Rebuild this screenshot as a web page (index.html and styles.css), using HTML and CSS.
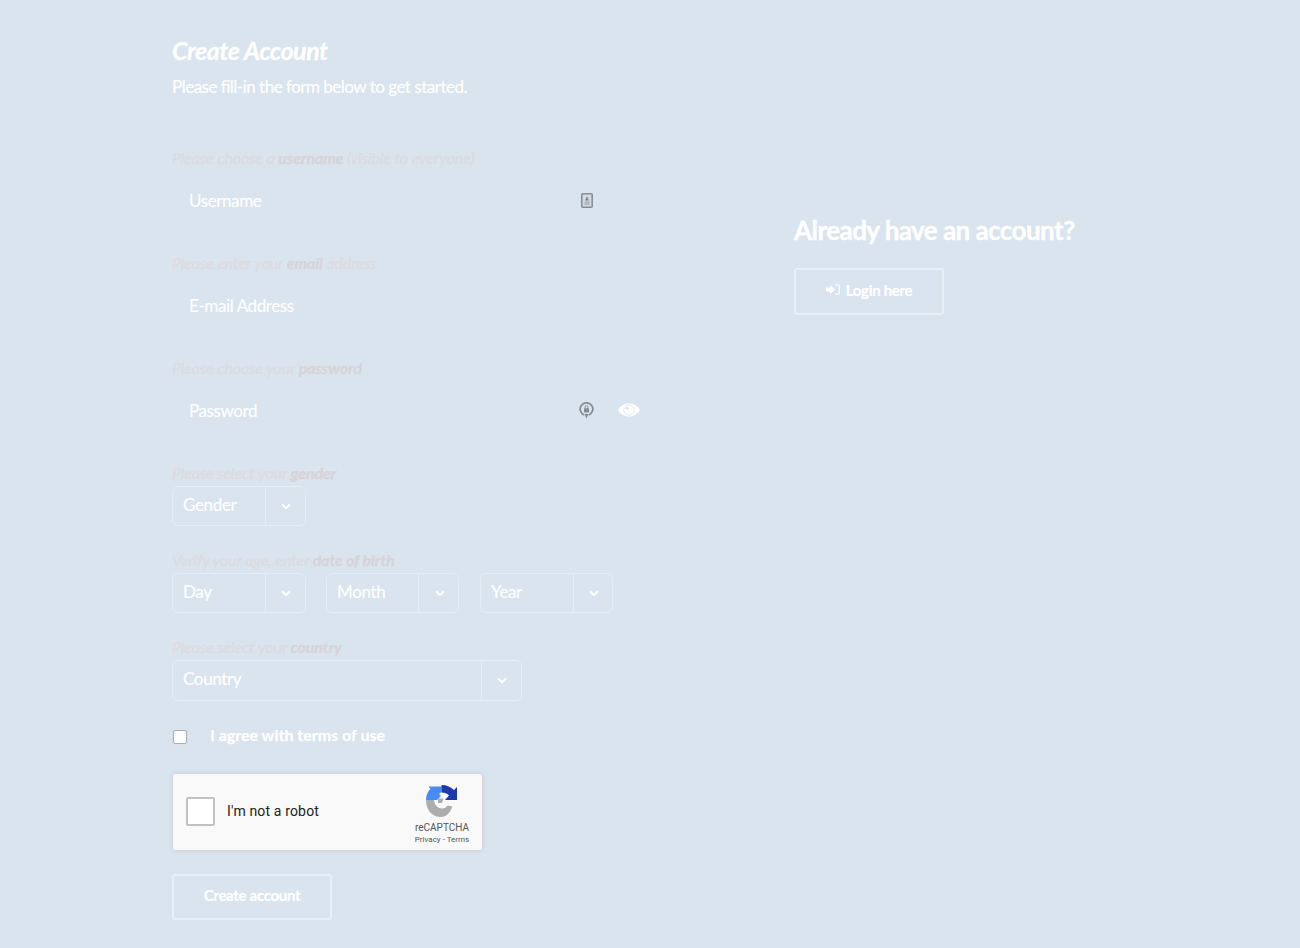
FILE: index.html
```html
<!DOCTYPE html>
<html lang="en">
<head>
<meta charset="utf-8">
<title>Create Account</title>
<link rel="stylesheet" href="styles.css">
</head>
<body>
<main class="page">
  <form class="form-col">
    <header class="head">
      <h1>Create Account</h1>
      <p>Please fill-in the form below to get started.</p>
    </header>

    <div class="field">
      <label>Please choose a <b>username</b> (visible to everyone)</label>
      <div class="input-row">
        <span class="ph">Username</span>
        <svg class="icon-card" viewBox="0 0 12 15"><rect x="0.8" y="0.8" width="10.4" height="13.4" rx="1" fill="#d3dbe3" stroke="#888e94" stroke-width="1.6"/><path d="M6 3.200 8 7.400H4Z" fill="#82888e"/><rect x="3.500" y="8.600" width="5" height="1.100" fill="#9aa0a6"/><rect x="3.500" y="10.600" width="5" height="1.100" fill="#9aa0a6"/></svg>
      </div>
    </div>

    <div class="field">
      <label>Please enter your <b>email</b> address</label>
      <div class="input-row"><span class="ph">E-mail Address</span></div>
    </div>

    <div class="field">
      <label>Please choose your <b>password</b></label>
      <div class="input-row">
        <span class="ph">Password</span>
        <svg class="icon-lock" viewBox="0 0 15 17"><path d="M5.200 13A6.300 6.300 0 1 1 9.800 13" fill="none" stroke="#858b90" stroke-width="1.700"/><rect x="5" y="6.200" width="5" height="4.400" rx="0.600" fill="#858b90"/><path d="M6 6.400V5.200a1.500 1.500 0 0 1 3 0v1.200" fill="none" stroke="#858b90" stroke-width="1"/><path d="M5.500 12h4L7.500 16.500Z" fill="#858b90"/></svg>
        <svg class="icon-eye" viewBox="0 0 22 14"><path fill="#fff" d="M11 .5C6.200.5 2.200 3 0 7c2.200 4 6.200 6.500 11 6.500S19.800 11 22 7C19.800 3 15.800.5 11 .5Z"/><circle cx="11" cy="7" r="5.200" fill="none" stroke="#d9e4ef" stroke-width="0.800"/><circle cx="9.200" cy="5.300" r="1.500" fill="#d9e4ef"/></svg>
      </div>
    </div>

    <div class="field tight">
      <label>Please select your <b>gender</b></label>
      <div class="select s-small"><span class="val">Gender</span><span class="caret"><svg viewBox="0 0 10 7"><path d="M1 1.200 5 5.200 9 1.200" fill="none" stroke="#fff" stroke-width="2"/></svg></span></div>
    </div>

    <div class="field tight">
      <label>Verify your age, enter <b>date of birth</b></label>
      <div class="dob">
        <div class="select s-small"><span class="val">Day</span><span class="caret"><svg viewBox="0 0 10 7"><path d="M1 1.200 5 5.200 9 1.200" fill="none" stroke="#fff" stroke-width="2"/></svg></span></div>
        <div class="select s-narrow"><span class="val">Month</span><span class="caret"><svg viewBox="0 0 10 7"><path d="M1 1.200 5 5.200 9 1.200" fill="none" stroke="#fff" stroke-width="2"/></svg></span></div>
        <div class="select s-narrow s-last"><span class="val">Year</span><span class="caret"><svg viewBox="0 0 10 7"><path d="M1 1.200 5 5.200 9 1.200" fill="none" stroke="#fff" stroke-width="2"/></svg></span></div>
      </div>
    </div>

    <div class="field tight">
      <label>Please select your <b>country</b></label>
      <div class="select s-wide"><span class="val">Country</span><span class="caret"><svg viewBox="0 0 10 7"><path d="M1 1.200 5 5.200 9 1.200" fill="none" stroke="#fff" stroke-width="2"/></svg></span></div>
    </div>

    <div class="agree">
      <span class="check"></span>
      <span class="agree-text">I agree with terms of use</span>
    </div>

    <div class="captcha">
      <span class="cap-box"></span>
      <span class="cap-text">I'm not a robot</span>
      <div class="cap-brand">
        <svg class="cap-logo" viewBox="0 0 32 32"><path fill="#adadad" d="M0 15H8C8.500 20 12 23.500 16 23.500C18.500 23.500 20.500 22.500 21.500 20.500L26.500 21.500C24 28 20 32 15 32C6 32 0 25 0 15Z"/><path fill="#adadad" d="M12 13.500H17.500L16 18H12Z"/><path fill="#4a8af4" d="M0 15C0 10 2 6 4.500 4L2.500 1.500H15.500V7L13 9 15 11 11 15Z"/><path fill="#1c3aa9" d="M15.500 0C21 0 25 2 28 5L31 2V15H19L23 10.500C21.500 8.500 19 7.500 15.500 7.500Z"/></svg>
        <span class="cap-name">reCAPTCHA</span>
        <span class="cap-links">Privacy - Terms</span>
      </div>
    </div>

    <button type="button" class="btn btn-create">Create account</button>
  </form>

  <aside class="side">
    <h2>Already have an account?</h2>
    <a class="btn btn-login"><svg class="icon-login" viewBox="0 0 14 11"><path fill="#fff" d="M0 3.500H4V.8L9 5.500 4 10.200V7.500H0Z"/><path fill="none" stroke="#fff" stroke-width="1.200" d="M9.500 .8H12c.8 0 1.300.6 1.300 1.300V8.900c0 .7-.5 1.300-1.300 1.300H9.500"/></svg>Login here</a>
  </aside>
</main>
</body>
</html>
```
FILE: styles.css
```css
* { box-sizing: border-box; }
html, body { margin: 0; height: 100%; }
body {
  background: #d9e4ef;
  color: #fff;
  font-family: Lato, "Open Sans", sans-serif;
  overflow: hidden;
}
.page { display: flex; padding-left: 172px; height: 948px; }
.form-col { width: 622px; padding-top: 37px; display: flex; flex-direction: column; align-items: flex-start; }
.head { margin-bottom: 52px; }
h1 { margin: 0; font-size: 25px; line-height: 26px; font-weight: 700; font-style: italic; letter-spacing: -0.45px; -webkit-text-stroke: .3px #fff; }
.head p { margin: 14px 0 0; font-size: 17px; line-height: 20px; letter-spacing: -0.5px; -webkit-text-stroke: .15px #fff; }
.field { width: 100%; margin-bottom: 32px; }
.field.tight { margin-bottom: 25px; }
.field label { display: block; font-size: 16px; line-height: 20px; font-style: italic; color: #dddbe0; letter-spacing: -0.12px; transform: translateY(-1px); -webkit-text-stroke: .25px #dddbe0; }
.field label b { color: #d8d3d7; font-weight: 700; -webkit-text-stroke: .25px #d8d3d7; }
.input-row { height: 42px; margin-top: 11px; padding-left: 17px; padding-bottom: 2px; display: flex; align-items: center; position: relative; font-size: 17px; }
.ph { letter-spacing: -0.4px; -webkit-text-stroke: .15px #fff; }
.icon-card { position: absolute; left: 409px; top: 13px; width: 12px; height: 15px; }
.icon-lock { position: absolute; left: 407px; top: 12px; width: 15px; height: 17px; }
.icon-eye { position: absolute; left: 446px; top: 13px; width: 22px; height: 14px; }
.tight label { margin-bottom: 2px; }
.select { height: 40px; display: flex; border: 1px solid #e5edf4; border-radius: 6px; font-size: 17px; }
.s-small { width: 134px; }
.s-narrow { width: 133px; }
.s-last { margin-left: 1px; }
.s-wide { width: 350px; height: 41px; }
.val { flex: 1; padding-left: 10px; line-height: 35px; letter-spacing: -0.35px; -webkit-text-stroke: .15px #fff; }
.caret { width: 40px; border-left: 1px solid #e5edf4; display: flex; align-items: center; justify-content: center; }
.caret svg { width: 10px; height: 7px; }
.s-narrow .caret svg { margin-left: 2px; }
.s-last .caret { width: 39px; }
.dob { display: flex; gap: 20px; }
.agree { display: flex; align-items: center; height: 20px; margin-top: -1px; }
.check { width: 14px; height: 14px; margin: 4px 0 0 1px; background: #fff; border: 1px solid #a9adb1; border-radius: 2px; }
.agree-text { margin-left: 23px; font-size: 16px; font-weight: 700; letter-spacing: 0; -webkit-text-stroke: .25px #fff; position: relative; top: -1px; }
.captcha { width: 311px; height: 78px; margin-top: 28px; padding-bottom: 2px; background: #f9f9f9; border: 1px solid #d6d6d6; border-radius: 3px; box-shadow: 0 0 4px rgba(0,0,0,.08); display: flex; align-items: center; position: relative; color: #222; font-family: Roboto, Arial, sans-serif; }
.cap-box { width: 29px; height: 29px; margin-left: 13px; background: #fff; border: 2px solid #c1c1c1; border-radius: 2px; }
.cap-text { margin-left: 12px; font-size: 14px; letter-spacing: .15px; }
.cap-brand { position: absolute; left: 233px; top: 11px; width: 72px; display: flex; flex-direction: column; align-items: center; color: #555; }
.cap-logo { width: 32px; height: 32px; }
.cap-name { margin-top: 4px; font-size: 10px; line-height: 14px; }
.cap-links { font-size: 8px; line-height: 10px; }
.btn { display: flex; align-items: center; justify-content: center; border: 2px solid #e8eff5; border-radius: 3px; background: transparent; color: #fff; font-family: inherit; font-weight: 700; font-size: 15px; letter-spacing: -0.3px; -webkit-text-stroke: .2px #fff; }
.btn-create { width: 160px; height: 46px; margin-top: 23px; padding: 0 0 5px; }
.side { padding-top: 214px; }
h2 { margin: 0; font-size: 26px; line-height: 32px; font-weight: 700; letter-spacing: -0.55px; -webkit-text-stroke: .4px #fff; }
.btn-login { width: 150px; height: 47px; margin-top: 22px; padding-bottom: 4px; }
.icon-login { width: 14px; height: 11px; margin-right: 6px; }
```
